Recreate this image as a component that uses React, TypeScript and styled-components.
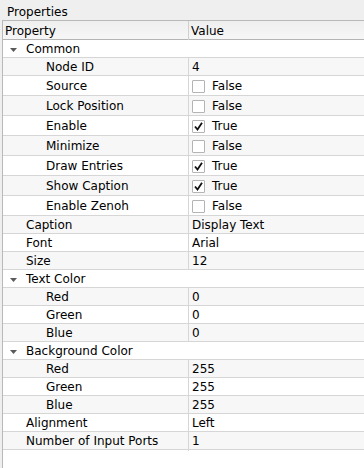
import styled, { createGlobalStyle } from 'styled-components'

const GlobalStyle = createGlobalStyle`
  body {
    margin: 0;
    font-family: 'DejaVu Sans', sans-serif;
    font-size: 12px;
    color: #000;
  }
`

type Row = {
  label: string
  level: number
  group?: boolean
  value?: string
  checked?: boolean
}

const rows: Row[] = [
  { label: 'Common', level: 0, group: true },
  { label: 'Node ID', level: 1, value: '4' },
  { label: 'Source', level: 1, checked: false },
  { label: 'Lock Position', level: 1, checked: false },
  { label: 'Enable', level: 1, checked: true },
  { label: 'Minimize', level: 1, checked: false },
  { label: 'Draw Entries', level: 1, checked: true },
  { label: 'Show Caption', level: 1, checked: true },
  { label: 'Enable Zenoh', level: 1, checked: false },
  { label: 'Caption', level: 0, value: 'Display Text' },
  { label: 'Font', level: 0, value: 'Arial' },
  { label: 'Size', level: 0, value: '12' },
  { label: 'Text Color', level: 0, group: true },
  { label: 'Red', level: 1, value: '0' },
  { label: 'Green', level: 1, value: '0' },
  { label: 'Blue', level: 1, value: '0' },
  { label: 'Background Color', level: 0, group: true },
  { label: 'Red', level: 1, value: '255' },
  { label: 'Green', level: 1, value: '255' },
  { label: 'Blue', level: 1, value: '255' },
  { label: 'Alignment', level: 0, value: 'Left' },
  { label: 'Number of Input Ports', level: 0, value: '1' }
]

const Panel = styled.div`
  width: 364px;
  height: 468px;
  background: #efefef;
  display: flex;
  flex-direction: column;
  overflow: hidden;
`

const TitleBar = styled.div`
  height: 18px;
  padding-top: 2px;
  line-height: 20px;
  padding-left: 7px;
  flex-shrink: 0;
`

const Tree = styled.div`
  flex: 1;
  margin-left: 2px;
  border-left: 1px solid #b9b9b9;
  border-top: 1px solid #b9b9b9;
  background: #fff;
  display: flex;
  flex-direction: column;
`

const Header = styled.div`
  display: grid;
  grid-template-columns: 186px 1fr;
  height: 18px;
  line-height: 20px;
  background: linear-gradient(#efefef, #f6f6f6);
  border-bottom: 1px solid #b4b4b4;
`

const HeaderCell = styled.div`
  padding-left: 2px;
  &:first-child {
    border-right: 1px solid #cfcfcf;
  }
`

const RowLine = styled.div<{ $alt: boolean; $tall: boolean }>`
  display: grid;
  grid-template-columns: 186px 1fr;
  height: ${p => (p.$tall ? 18 : 16)}px;
  padding-top: 1px;
  line-height: ${p => (p.$tall ? 19 : 17)}px;
  border-bottom: 1px solid #d6d6d6;
  background: ${p => (p.$alt ? '#f7f7f7' : '#fff')};
  white-space: nowrap;
`

const NameCell = styled.div<{ $level: number }>`
  padding-left: ${p => 23 + p.$level * 20}px;
  border-right: 1px solid #d6d6d6;
  margin-top: -1px;
  padding-top: 1px;
  margin-bottom: -1px;
`

const GroupCell = styled.div<{ $level: number }>`
  grid-column: 1 / -1;
  position: relative;
  padding-left: ${p => 23 + p.$level * 20}px;
`

const Arrow = styled.svg`
  position: absolute;
  left: 7px;
  top: 7px;
`

const ValueCell = styled.div`
  padding-left: 3px;
  display: flex;
  align-items: center;
  gap: 7px;
  height: 100%;
`

const Box = styled.span`
  width: 11px;
  height: 11px;
  border: 1px solid #b4b4b4;
  border-radius: 1px;
  background: #fff;
  display: flex;
  align-items: center;
  justify-content: center;
`

function Check({ checked }: { checked: boolean }) {
  return (
    <Box>
      {checked && (
        <svg width="9" height="9" viewBox="0 0 9 9">
          <path d="M1 4.5 L3.5 7.5 L8 0.8" fill="none" stroke="#111" strokeWidth="1.8" />
        </svg>
      )}
    </Box>
  )
}

export default function App() {
  return (
    <>
      <GlobalStyle />
      <Panel>
        <TitleBar>Properties</TitleBar>
        <Tree>
          <Header>
            <HeaderCell>Property</HeaderCell>
            <HeaderCell>Value</HeaderCell>
          </Header>
          {rows.map((row, i) => (
            <RowLine key={i} $alt={i % 2 === 1} $tall={row.checked !== undefined}>
              {row.group ? (
                <GroupCell $level={row.level}>
                  <Arrow width="7" height="4" viewBox="0 0 7 4">
                    <path d="M0 0 L7 0 L3.5 4 Z" fill="#5a5a5a" />
                  </Arrow>
                  {row.label}
                </GroupCell>
              ) : (
                <>
                  <NameCell $level={row.level}>{row.label}</NameCell>
                  <ValueCell>
                    {row.checked !== undefined ? (
                      <>
                        <Check checked={row.checked} />
                        {row.checked ? 'True' : 'False'}
                      </>
                    ) : (
                      row.value
                    )}
                  </ValueCell>
                </>
              )}
            </RowLine>
          ))}
        </Tree>
      </Panel>
    </>
  )
}
